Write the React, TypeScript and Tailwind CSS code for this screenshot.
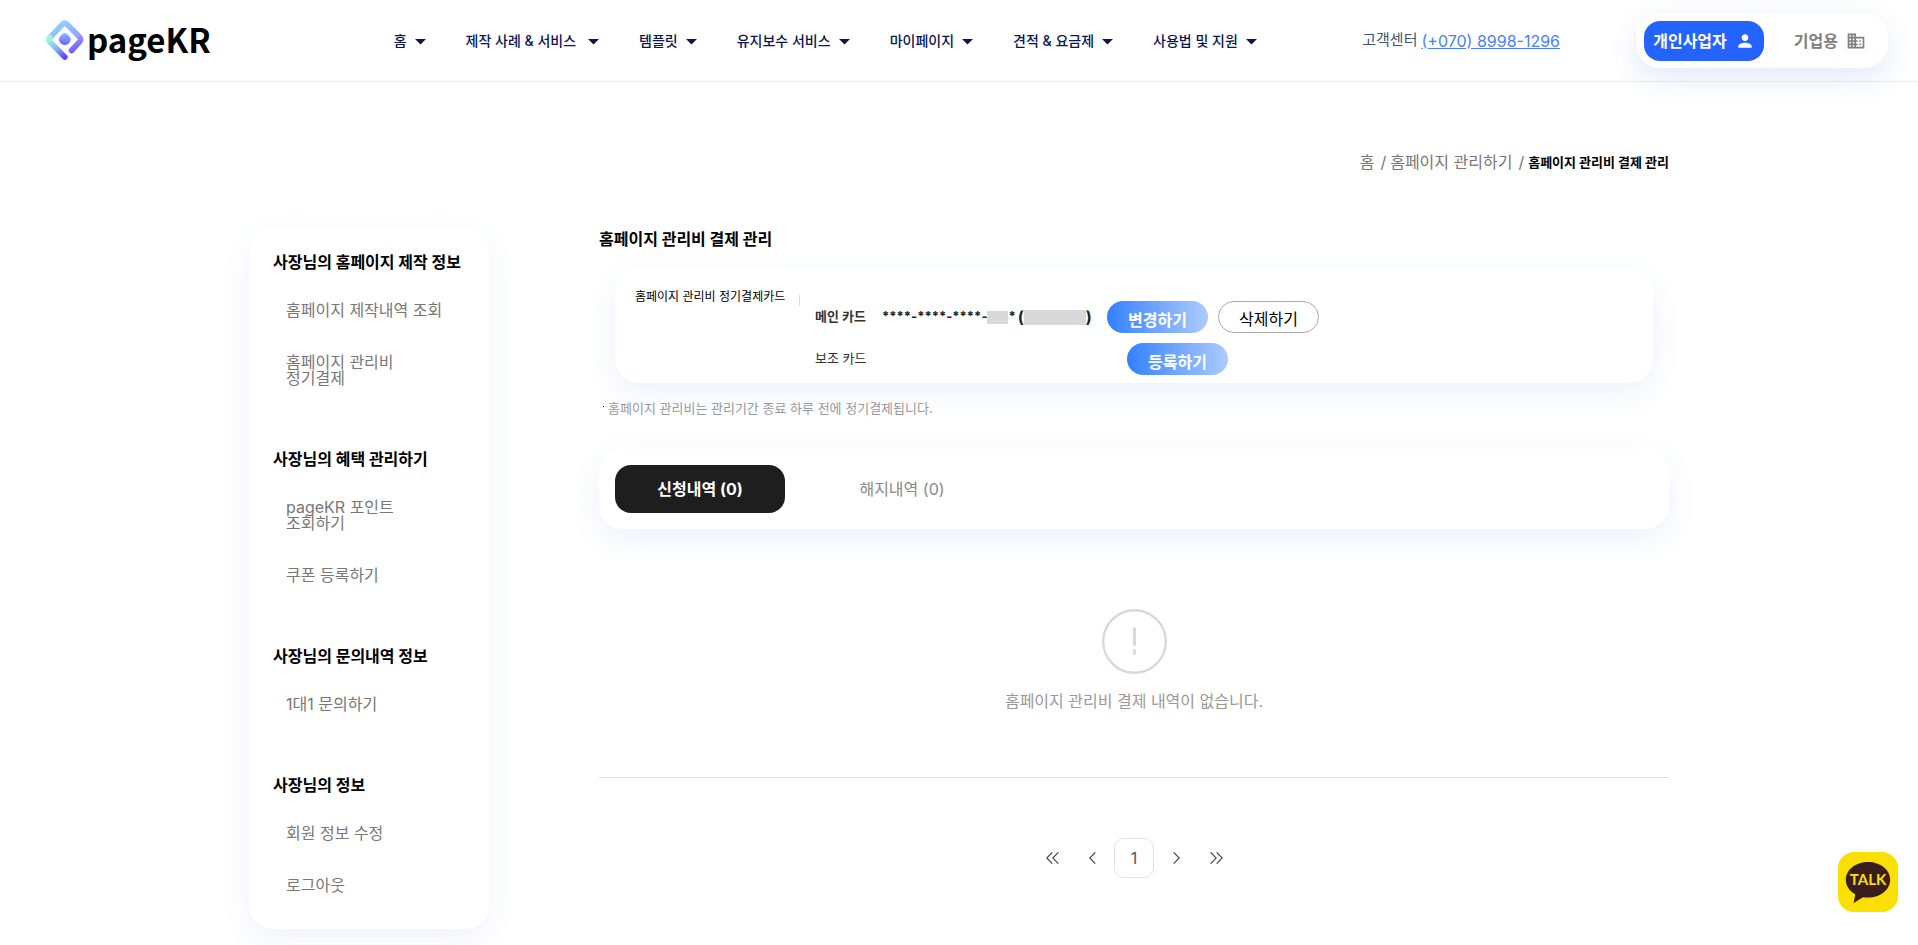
import React, { useState } from "react";
import { MdBusiness, MdPerson } from "react-icons/md";

type MenuItem = {
  label: string;
  className: string;
};

type SideGroup = {
  title: string;
  items: string[][];
};

const menu: MenuItem[] = [
  { label: "홈", className: "gap-2" },
  { label: "제작 사례 & 서비스", className: "gap-3" },
  { label: "템플릿", className: "gap-2" },
  { label: "유지보수 서비스", className: "gap-2" },
  { label: "마이페이지", className: "gap-2" },
  { label: "견적 & 요금제", className: "gap-2" },
  { label: "사용법 및 지원", className: "gap-2" },
];

const sideGroups: SideGroup[] = [
  {
    title: "사장님의 홈페이지 제작 정보",
    items: [["홈페이지 제작내역 조회"], ["홈페이지 관리비", "정기결제"]],
  },
  {
    title: "사장님의 혜택 관리하기",
    items: [["pageKR 포인트", "조회하기"], ["쿠폰 등록하기"]],
  },
  { title: "사장님의 문의내역 정보", items: [["1대1 문의하기"]] },
  { title: "사장님의 정보", items: [["회원 정보 수정"], ["로그아웃"]] },
];

const tabs = ["신청내역 (0)", "해지내역 (0)"];

function Logo() {
  return (
    <a href="#" className="flex items-center gap-[3px]">
      <svg width="38" height="41" viewBox="0 0 38 41" fill="none">
        <defs>
          <linearGradient id="mark" x1="10" y1="4" x2="25" y2="38" gradientUnits="userSpaceOnUse">
            <stop offset="0" stopColor="#8fd3ff" />
            <stop offset="0.5" stopColor="#94a6ff" />
            <stop offset="1" stopColor="#6a3dff" />
          </linearGradient>
          <linearGradient id="markLeft" x1="3" y1="18" x2="19" y2="38" gradientUnits="userSpaceOnUse">
            <stop offset="0" stopColor="#9dfbd6" />
            <stop offset="0.5" stopColor="#86b4fb" />
            <stop offset="1" stopColor="#5b3dff" />
          </linearGradient>
          <linearGradient id="dot" x1="19" y1="13" x2="19" y2="26" gradientUnits="userSpaceOnUse">
            <stop offset="0" stopColor="#8ab8ff" />
            <stop offset="1" stopColor="#6a5cff" />
          </linearGradient>
        </defs>
        <path d="M3.8 17.600 L16.300 4.500 Q18.800 2 21.300 4.500 L33.600 17 Q35.500 19.300 33.600 21.600 L25.500 30.500" stroke="url(#mark)" strokeWidth="5.600" strokeLinecap="round" />
        <path d="M3.800 17.600 Q1.900 19.600 3.800 21.800 L18.800 37" stroke="url(#markLeft)" strokeWidth="5.600" strokeLinecap="round" />
        <path d="M16.500 14 Q18.800 12 21 14 L23.800 16.800 Q25.500 18.800 24.200 21.200 Q22.500 25 18.800 25 Q15 25 13.300 21.200 Q12.200 18.800 13.800 16.800 Z" fill="url(#dot)" />
      </svg>
      <span className="pb-1 font-['Noto_Sans_CJK_JP',sans-serif] text-[33px] leading-10 font-bold text-black">pageKR</span>
    </a>
  );
}

function Header() {
  return (
    <header className="flex h-[82px] items-center border-b border-[#ededed] pr-[30px] pl-[46px]">
      <Logo />
      <nav className="ml-[183px] flex items-center gap-10">
        {menu.map((item) => (
          <button key={item.label} className={`flex items-center text-sm font-medium whitespace-nowrap text-[#0a1551] ${item.className}`}>
            {item.label}
            <svg width="11" height="6" viewBox="0 0 11 6" fill="currentColor" className="mt-0.5">
              <path d="M0 0h11L5.500 5.500z" />
            </svg>
          </button>
        ))}
      </nav>
      <div className="ml-auto flex items-center gap-1 text-[15px] text-[#3d5670]">
        고객센터
        <a href="tel:+07089981296" className="text-base text-[#4a80f8] underline">
          (+070) 8998-1296
        </a>
      </div>
      <div className="ml-[76px] flex h-[55px] w-[252px] items-center rounded-[24px] bg-white px-2 shadow-[0_10px_30px_rgba(40,100,220,0.14)]">
        <button className="flex h-10 w-[120px] items-center justify-center gap-2 rounded-2xl bg-[#2563ff] text-base font-bold text-white">
          개인사업자
          <MdPerson size={20} />
        </button>
        <button className="flex h-10 flex-1 items-center justify-end gap-2 pr-3.5 text-base font-bold text-[#808080]">
          기업용
          <MdBusiness size={20} />
        </button>
      </div>
    </header>
  );
}

function Sidebar() {
  return (
    <aside className="flex w-60 shrink-0 flex-col gap-[43px] self-start rounded-3xl bg-white px-6 pt-[22px] pb-[18px] shadow-[0_10px_30px_rgba(60,120,230,0.09)]">
      {sideGroups.map((group) => (
        <section key={group.title}>
          <h2 className="mb-2.5 text-base leading-6 font-bold whitespace-nowrap text-black">{group.title}</h2>
          <ul className="pl-[13px]">
            {group.items.map((lines) => (
              <li key={lines[0]} className="py-[18px] leading-4 text-[#777]">
                <a href="#" className="block">
                  {lines.map((line) => (
                    <span key={line} className="block">
                      {line}
                    </span>
                  ))}
                </a>
              </li>
            ))}
          </ul>
        </section>
      ))}
    </aside>
  );
}

function GradientButton({ children }: { children: React.ReactNode }) {
  return (
    <button className="h-8 w-[101px] rounded-2xl bg-linear-to-r from-[#3080ff] to-[#accaff] pt-1.5 text-base leading-6 font-bold text-white">
      {children}
    </button>
  );
}

function CardPanel() {
  return (
    <section className="mx-4 flex h-[114px] rounded-3xl bg-white px-5 shadow-[0_10px_30px_rgba(60,120,230,0.1)]">
      <h2 className="w-[149px] pt-[18px] text-xs leading-5 whitespace-nowrap text-black">홈페이지 관리비 정기결제카드</h2>
      <span className="mt-[26px] ml-[15px] h-[11px] w-px bg-[#ddd]" />
      <div className="ml-[15px] flex flex-col gap-2.5 pt-8 text-[13px] text-[#333]">
        <div className="flex h-8 items-center">
          <span className="w-[67px] font-bold">메인 카드</span>
          <span className="flex w-[225px] items-center font-bold text-[#222]">
            <span>****-****-****-</span>
            <span className="h-[13px] w-[21px] bg-[#d9d9d9]" />
            <span>*</span>
            <span className="ml-0.5 text-base">(</span>
            <span className="h-[15px] w-[62px] bg-[#d9d9d9]" />
            <span className="text-base">)</span>
          </span>
          <GradientButton>변경하기</GradientButton>
          <button className="ml-2.5 h-8 w-[101px] rounded-2xl border border-[#aaa] bg-white pt-1 text-base leading-6 text-black">
            삭제하기
          </button>
        </div>
        <div className="flex h-8 items-center">
          <span className="w-[312px]">보조 카드</span>
          <GradientButton>등록하기</GradientButton>
        </div>
      </div>
    </section>
  );
}

function Chevrons({ double, flip }: { double?: boolean; flip?: boolean }) {
  return (
    <svg
      width={double ? 13 : 7}
      height="12"
      viewBox={double ? "0 0 13 12" : "0 0 7 12"}
      fill="none"
      stroke="#444"
      strokeWidth="1.1"
      className={flip ? "rotate-180" : ""}
    >
      <path d="M6.300 0.300L0.800 6l5.500 5.700" />
      {double && <path d="M12.300 0.300L6.800 6l5.500 5.700" />}
    </svg>
  );
}

function Pagination() {
  const arrow = "flex size-10 items-center justify-center";
  return (
    <nav className="mt-[60px] flex justify-center">
      <button className={arrow} aria-label="처음">
        <Chevrons double />
      </button>
      <button className={arrow} aria-label="이전">
        <Chevrons />
      </button>
      <button className="mx-0.5 size-10 rounded-[10px] border border-[#e2e2e2] text-base text-[#555]">1</button>
      <button className={arrow} aria-label="다음">
        <Chevrons flip />
      </button>
      <button className={arrow} aria-label="마지막">
        <Chevrons double flip />
      </button>
    </nav>
  );
}

function App() {
  const [activeTab, setActiveTab] = useState<string>(tabs[0]);

  return (
    <div className="min-h-screen bg-white font-['Inter','Noto_Sans_CJK_KR',sans-serif]">
      <Header />
      <main className="mx-auto max-w-[1420px]">
        <div className="flex h-[146px] items-start justify-end gap-1 pt-[68px] text-base leading-6 text-[#777]">
          <a href="#">홈</a>
          <span className="ml-0.5">/</span>
          <a href="#">홈페이지 관리하기</a>
          <span className="ml-0.5">/</span>
          <span className="text-[13px] font-bold text-black">홈페이지 관리비 결제 관리</span>
        </div>
        <div className="flex gap-[110px]">
          <Sidebar />
          <div className="min-w-0 flex-1">
            <h1 className="mb-[19px] text-base leading-[22px] font-bold text-black">홈페이지 관리비 결제 관리</h1>
            <CardPanel />
            <p className="mt-[15px] flex gap-1 pl-1 text-[13px] leading-5 text-[#999]">
              <span className="mt-2 size-px bg-black" />
              홈페이지 관리비는 관리기간 종료 하루 전에 정기결제됩니다.
            </p>
            <div className="mt-[31px] flex h-20 items-center gap-8 rounded-3xl bg-white px-4 shadow-[0_10px_30px_rgba(60,120,230,0.1)]">
              {tabs.map((tab) => (
                <button
                  key={tab}
                  onClick={() => setActiveTab(tab)}
                  className={`h-12 w-[170px] rounded-2xl text-base ${
                    activeTab === tab ? "bg-[#1e1e1e] font-bold text-white" : "text-[#888]"
                  }`}
                >
                  {tab}
                </button>
              ))}
            </div>
            <div className="flex flex-col items-center border-b border-[#ddd] pt-20 pb-16">
              <svg width="65" height="65" viewBox="0 0 65 65" fill="none" stroke="#d9d9d9" strokeLinecap="round">
                <circle cx="32.5" cy="32.5" r="31.300" strokeWidth="2.400" />
                <path d="M32.500 19.500v16M32.500 41.500v3" strokeWidth="3" />
              </svg>
              <p className="mt-[15px] text-base leading-6 text-[#999]">홈페이지 관리비 결제 내역이 없습니다.</p>
            </div>
            <Pagination />
          </div>
        </div>
      </main>
      <a href="#" className="fixed right-5 bottom-[33px] flex size-[60px] items-center justify-center rounded-2xl bg-[#f9e000]">
        <svg width="46" height="42" viewBox="0 0 46 42">
          <path d="M23 1C10.500 1 0.800 9 0.800 18.800c0 6.200 3.800 11.400 9.500 14.500L8.600 42 18 36.200c1.600.3 3.300.4 5 .4 12.500 0 22.200-7.900 22.200-17.800S35.500 1 23 1z" fill="#3a1d1d" />
          <text x="23" y="24" textAnchor="middle" fontSize="15" fontWeight="700" fill="#f9e000" className="font-['Lato',sans-serif]">
            TALK
          </text>
        </svg>
      </a>
    </div>
  );
}

export default App;
